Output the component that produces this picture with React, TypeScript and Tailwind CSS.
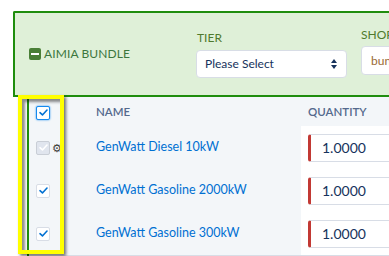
import React from "react";

function Check({ className }: { className: string }) {
  return (
    <svg viewBox="0 0 10 8" className={className}>
      <path d="M1 4.2 L3.8 6.8 L9 1.2" fill="none" stroke="currentColor" strokeWidth="1.8" strokeLinecap="round" strokeLinejoin="round" />
    </svg>
  );
}

function Box({ kind }: { kind: "focus" | "normal" | "disabled" }) {
  const cls =
    kind === "focus"
      ? "border-[1.5px] border-[#1589ee] bg-white text-[#0070d2] shadow-[0_0_2px_#1589ee]"
      : kind === "disabled"
      ? "border border-[#c9ced6] bg-[#e0e5ee] text-white"
      : "border border-[#d8dde6] bg-white text-[#0070d2]";
  return (
    <div className={`shrink-0 w-[14px] h-[14px] rounded-[2px] flex items-center justify-center ${cls}`}>
      <Check className="w-[9px] h-[7px]" />
    </div>
  );
}

const rows = ["GenWatt Diesel 10kW", "GenWatt Gasoline 2000kW", "GenWatt Gasoline 300kW"];

export default function App() {
  return (
    <div
      className="w-[389px] h-[256px] bg-white relative overflow-hidden"
      style={{ fontFamily: "Lato, 'Open Sans', sans-serif" }}
    >
      <div className="pt-[11px] pl-[13px]">
        <div className="h-[86px] w-[420px] border-2 border-r-0 border-[#1f8d0d] bg-[#dff0d8] rounded-tl-[2px] flex">
          <div className="shrink-0 w-[181px] pl-[14px] flex items-center gap-[3px]">
            <div className="w-[12px] h-[12px] rounded-[2px] bg-[#4a7f37] flex items-center justify-center">
              <div className="w-[8px] h-[2px] bg-white" />
            </div>
            <span className="text-[12px] text-[#3c763d] leading-none tracking-[0.1px]">AIMIA BUNDLE</span>
          </div>
          <div className="shrink-0 flex flex-col pt-[17px]">
            <span className="text-[12px] leading-[16px] text-[#4f7a2e] pl-[1px]">TIER</span>
            <div className="mt-[4px] w-[151px] h-[28px] bg-white border border-[#d8dde6] rounded-[4px] flex items-center justify-between pl-[8px] pr-[9px]">
              <span className="text-[12px] text-[#16325c]">Please Select</span>
              <div className="flex flex-col gap-[2px]">
                <div className="w-0 h-0 border-l-[3px] border-r-[3px] border-b-[4px] border-l-transparent border-r-transparent border-b-[#16325c]" />
                <div className="w-0 h-0 border-l-[3px] border-r-[3px] border-t-[4px] border-l-transparent border-r-transparent border-t-[#16325c]" />
              </div>
            </div>
          </div>
          <div className="shrink-0 flex flex-col pt-[14px] ml-[14px]">
            <span className="text-[12px] leading-[16px] text-[#4f7a2e]">SHOP</span>
            <div className="mt-[3px] w-[120px] h-[29px] bg-white border border-[#d8dde6] rounded-[4px] flex items-center pl-[9px]">
              <span className="text-[12px] text-[#9a6a35]">bundle</span>
            </div>
          </div>
        </div>
      </div>

      <div className="flex h-[159px]">
        <div className="shrink-0 w-[27px] bg-white" />
        <div className="shrink-0 w-[2px] bg-[#1f8d0d]" />
        <div className="flex-1 min-w-0 bg-[#f3f6f9] flex flex-col">
          <div className="h-[29px] flex items-center">
            <div className="shrink-0 w-[67px] pl-[7px] pt-[2px]">
              <Box kind="focus" />
            </div>
            <div className="shrink-0 w-[205px] text-[11.5px] text-[#54698d] font-semibold">NAME</div>
            <div className="shrink-0 pl-[7px] text-[11.5px] text-[#54698d] font-semibold">QUANTITY</div>
          </div>
          {rows.map((r, i) => (
            <div key={r} className="h-[43px] flex items-stretch">
              <div className="shrink-0 w-[67px] pl-[7px] flex items-center gap-[2px]">
                <Box kind={i === 0 ? "disabled" : "normal"} />
                {i === 0 && <span className="text-[11px] text-[#3e3e3c] leading-none">⚙</span>}
              </div>
              <div className="shrink-0 w-[205px] flex items-center text-[12.5px] text-[#0070d2]">{r}</div>
              <div className="flex-1 bg-white flex items-center pl-[7px]">
                <div className="shrink-0 w-[100px] h-[28px] bg-white border border-[#d8dde6] border-l-[3px] border-l-[#c23934] rounded-l-[3px] flex items-center pl-[11px] text-[14px] text-[#16325c]">
                  1.0000
                </div>
              </div>
            </div>
          ))}
          <div className="h-px bg-[#d8dde6]" />
        </div>
      </div>

      <div className="absolute left-[18px] top-[95px] w-[46px] h-[159px] border-4 border-[#ffff00] shadow-[2px_2px_3px_rgba(0,0,0,0.55),inset_3px_3px_3px_rgba(0,0,0,0.45)]" />
    </div>
  );
}
